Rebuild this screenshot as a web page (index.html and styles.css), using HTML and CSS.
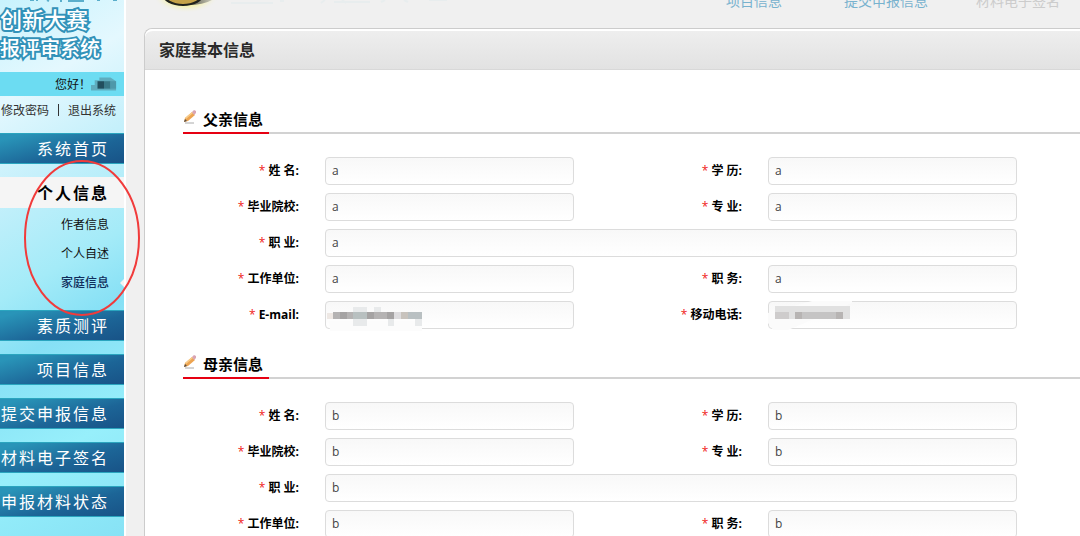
FILE: index.html
```html
<!DOCTYPE html>
<html lang="zh-CN">
<head>
<meta charset="utf-8">
<title>家庭基本信息</title>
<link rel="stylesheet" href="styles.css">
</head>
<body>
<div class="page">
  <aside class="sidebar">
    <div class="brand">
      <svg class="brand-edge" viewBox="0 0 124 4" aria-hidden="true"><path d="M30 0h4M37 0v1M47 0l2 1M61 0v2M68 1h16M97 0h3M113 0h4" stroke="#5aaecb" stroke-width="2"/></svg>
      <div class="brand-line">创新大赛</div>
      <div class="brand-line">报评审系统</div>
    </div>
    <div class="greeting"><span>您好！</span>
      <svg class="mask" viewBox="0 0 28 16" aria-hidden="true"><path d="M0 15V9h4V4h5V1h12l6 4v10z" fill="#5facbe"/><path d="M7 5h7v8H7z" fill="#224e5d"/><path d="M14 5h7v8h-7z" fill="#397988"/><path d="M21 5h6v8h-6z" fill="#4e98aa"/></svg>
    </div>
    <div class="account"><a href="#">修改密码</a><span class="bar"></span><a href="#">退出系统</a></div>
    <nav class="menu">
      <a class="item" href="#">系统首页</a>
      <div class="group">
        <a class="item current" href="#">个人信息</a>
        <div class="submenu">
          <a href="#">作者信息</a>
          <a href="#">个人自述</a>
          <a class="selected" href="#">家庭信息</a>
        </div>
        <svg class="marker" viewBox="0 0 118 156" aria-hidden="true"><ellipse cx="59" cy="78" rx="57" ry="77" fill="none" stroke="#f13b3b" stroke-width="2"/></svg>
      </div>
      <a class="item" href="#">素质测评</a>
      <a class="item" href="#">项目信息</a>
      <a class="item" href="#">提交申报信息</a>
      <a class="item" href="#">材料电子签名</a>
      <a class="item" href="#">申报材料状态</a>
    </nav>
  </aside>
  <div class="content">
    <header class="steps">
      <svg class="emblem" viewBox="0 0 320 14" aria-hidden="true">
        <defs><radialGradient id="glow"><stop offset="0.6" stop-color="#f5f2b0"/><stop offset="1" stop-color="#efefef" stop-opacity="0"/></radialGradient>
        <linearGradient id="shade"><stop offset="0" stop-color="#555544"/><stop offset="1" stop-color="#d8d8c8"/></linearGradient></defs>
        <ellipse cx="42" cy="-4" rx="33" ry="17" fill="url(#glow)"/>
        <path d="M44 5Q62 5 71-2H50z" fill="url(#shade)"/>
        <ellipse cx="39" cy="-6" rx="21" ry="12" fill="#20221d"/>
        <ellipse cx="39" cy="-6" rx="18" ry="10" fill="#c5a248"/>
        <path d="M87 3h42M136 1h4M181 0l-4 3M198 0l4 3M190 2h36M241 0l-4 2M260 0l4 2M285 0h18" stroke="#e8edee" stroke-width="2"/>
      </svg>
      <div class="step-links"><a href="#">项目信息</a><a href="#">提交申报信息</a><a class="off" href="#">材料电子签名</a></div>
    </header>
    <main class="panel">
      <h1 class="panel-title">家庭基本信息</h1>
      <form class="panel-body">
        <section class="section">
          <h2 class="section-title"><span class="tab"><svg class="pencil" viewBox="0 0 14 14" aria-hidden="true"><path d="M2 13h9" stroke="#aaa" stroke-width="1"/><path d="M1 12l1-4 7-6 3 3-7 6z" fill="#eda451"/><path d="M2 8l7-6 1 1-7 6z" fill="#f7cd8c"/><path d="M9 2l2-2 2 1v2l-2 2z" fill="#d9a5b4"/><path d="M1 12l1-3 2 2z" fill="#544b42"/></svg>父亲信息</span></h2>
          <div class="fields">
            <label for="f1">姓 名:</label><input id="f1" value="a">
            <label for="f2">学 历:</label><input id="f2" value="a">
            <label for="f3">毕业院校:</label><input id="f3" value="a">
            <label for="f4">专 业:</label><input id="f4" value="a">
            <label for="f5">职 业:</label><input class="wide" id="f5" value="a">
            <label for="f6">工作单位:</label><input id="f6" value="a">
            <label for="f7">职 务:</label><input id="f7" value="a">
            <label for="f8">E-mail:</label>
            <div class="masked"><input id="f8"><svg class="smudge" viewBox="0 0 100 30" aria-hidden="true"><path d="M4 20h93v10H5z" fill="#fcfcfc"/><path d="M28 6h14v19H28zM49 6h7v6h-7zM63 18h6v7h-6zM90 18h7v7h-7z" fill="#e8eaeb"/><path d="M2 12h6v6H2z" fill="#eee8e4"/><path d="M8 11h61v7H8z" fill="#b5b3b3"/><path d="M15 11h7v7h-7zM42 11h7v7h-7zM62 11h7v7h-7z" fill="#a5a3a3"/><path d="M28 11h14v7H28z" fill="#b8c0c0"/><path d="M69 11h7v7h-7z" fill="#dedddf"/><path d="M76 11h7v7h-7z" fill="#c8c3bd"/><path d="M83 11h14v7H83z" fill="#b9c0c2"/></svg></div>
            <label for="f9">移动电话:</label>
            <div class="masked"><input id="f9"><svg class="smudge" viewBox="0 0 100 30" aria-hidden="true"><path d="M0 12L44 0h40v2L20 29H5L0 22z" fill="#fbfbfb"/><path d="M7 5h75v13H7z" fill="#e1e1e1"/><path d="M7 11h7v7H7zM14 11h7v7h-7z" fill="#cecccc"/><path d="M27 11h48v7H27z" fill="#c5c4c4"/><path d="M27 11h7v7h-7zM68 11h7v7h-7z" fill="#b7b4b3"/></svg></div>
          </div>
        </section>
        <section class="section">
          <h2 class="section-title"><span class="tab"><svg class="pencil" viewBox="0 0 14 14" aria-hidden="true"><path d="M2 13h9" stroke="#aaa" stroke-width="1"/><path d="M1 12l1-4 7-6 3 3-7 6z" fill="#eda451"/><path d="M2 8l7-6 1 1-7 6z" fill="#f7cd8c"/><path d="M9 2l2-2 2 1v2l-2 2z" fill="#d9a5b4"/><path d="M1 12l1-3 2 2z" fill="#544b42"/></svg>母亲信息</span></h2>
          <div class="fields">
            <label for="m1">姓 名:</label><input id="m1" value="b">
            <label for="m2">学 历:</label><input id="m2" value="b">
            <label for="m3">毕业院校:</label><input id="m3" value="b">
            <label for="m4">专 业:</label><input id="m4" value="b">
            <label for="m5">职 业:</label><input class="wide" id="m5" value="b">
            <label for="m6">工作单位:</label><input id="m6" value="b">
            <label for="m7">职 务:</label><input id="m7" value="b">
          </div>
        </section>
      </form>
    </main>
  </div>
</div>
</body>
</html>
```
FILE: styles.css
```css
* { box-sizing: border-box; }
body {
  margin: 0;
  height: 100vh;
  overflow: hidden;
  background: #f0f0f0;
  color: #111;
  font-family: "Open Sans", "Noto Sans CJK SC", sans-serif;
  font-size: 12px;
}
a { color: inherit; text-decoration: none; }
.page { display: flex; min-height: 100vh; }

.sidebar {
  width: 126px;
  flex: none;
  border-right: 2px solid #fff;
  background: linear-gradient(150deg, #c9f3fd 0, #e4f8fe 90px, #c5f0fb 170px, #a4ebf8 260px, #86e0f5 320px, #97effb 420px, #84e0f4 100%);
}
.brand { height: 72px; overflow: hidden; }
.brand-edge { display: block; width: 100%; height: 4px; }
.brand-line {
  height: 30px;
  color: #fff;
  font-size: 22px;
  line-height: 30px;
  font-weight: 500;
  white-space: nowrap;
  -webkit-text-stroke: 4px #3292b9;
  paint-order: stroke fill;
}
.brand-line + .brand-line { font-size: 20px; }
.greeting {
  display: flex;
  align-items: center;
  justify-content: flex-end;
  height: 24px;
  padding-right: 7px;
  background: #6cdcf2;
}
.mask { width: 26px; height: 16px; }
.account {
  display: flex;
  align-items: center;
  justify-content: flex-end;
  height: 27px;
  padding-right: 8px;
  color: #333;
  white-space: nowrap;
}
.bar { width: 1px; height: 12px; margin: 0 9px; background: #333; }
.menu { display: flex; flex-direction: column; gap: 13px; padding-top: 10px; }
.item {
  display: flex;
  align-items: center;
  justify-content: flex-end;
  height: 31px;
  padding-right: 15px;
  border: 1px solid #2aa5bf;
  border-width: 1px 0;
  background: linear-gradient(165deg, #2994b8 10%, #1c6597 60%, #185387);
  color: #fff;
  font-size: 16px;
  letter-spacing: 2px;
  line-height: 26px;
  white-space: nowrap;
}
.current {
  border-color: #f5f5f5;
  background: #f5f5f5;
  color: #000;
  font-weight: 700;
}
.group { position: relative; }
.submenu { display: flex; flex-direction: column; padding: 2px 15px 0 0; text-align: right; }
.submenu a { height: 29px; line-height: 29px; }
.submenu .selected { color: #102e5c; font-weight: 500; }
.submenu .selected::after {
  content: "";
  position: absolute;
  right: 0;
  bottom: 10px;
  border: 4px solid transparent;
  border-right-color: #f4f4f4;
  border-left: 0;
}
.marker { position: absolute; z-index: 1; left: 23px; top: -17px; width: 118px; height: 156px; }

.content { flex: 1; min-width: 0; padding-left: 18px; }
.steps { display: flex; justify-content: space-between; height: 28px; overflow: hidden; }
.emblem { width: 320px; height: 14px; flex: none; }
.step-links {
  display: flex;
  align-items: flex-start;
  height: 20px;
  gap: 48px;
  margin-top: -9px;
  padding-right: 20px;
  color: #78b2ce;
  font-size: 14px;
  line-height: 20px;
  white-space: nowrap;
}
.step-links a:first-child { margin-right: 14px; }
.step-links .off { color: #ccc; }
.panel {
  min-height: calc(100vh - 28px);
  border: 1px solid #ccc;
  border-width: 1px 0 0 1px;
  border-radius: 8px 0 0 0;
  background: #fff;
}
.panel-title {
  margin: 0;
  padding: 0 14px;
  border-top: 2px solid #fff;
  border-bottom: 1px solid #d8d8d8;
  border-radius: 8px 0 0 0;
  background: linear-gradient(#eee, #e2e2e2);
  color: #2a2a2a;
  font-size: 16px;
  line-height: 38px;
}
.panel-body { padding: 34px 0 0 38px; }
.section { padding-bottom: 20px; }
.section-title { display: flex; margin: 0 0 23px; border-bottom: 2px solid #d2d2d2; font-size: 15px; line-height: 26px; color: #000; }
.tab { display: flex; gap: 6px; margin-bottom: -2px; padding: 2px 6px 0 0; border-bottom: 2px solid #e60012; }
.pencil { width: 14px; height: 14px; margin-top: 4px; }
.fields {
  display: grid;
  grid-template-columns: 116px 1fr 142px 1fr;
  gap: 8px 26px;
  padding-right: 63px;
}
label { color: #000; font-weight: 700; line-height: 28px; text-align: right; white-space: nowrap; }
label::before { content: "* "; color: #f02020; font-weight: 400; }
input {
  width: 100%;
  min-width: 0;
  height: 28px;
  padding: 0 6px 1px;
  border: 1px solid #dcdcdc;
  border-radius: 4px;
  background: linear-gradient(#f8f8f8, #fff);
  color: #444;
  font: inherit;
}
.wide { grid-column: 2 / -1; }
.masked { position: relative; }
.smudge { position: absolute; left: 0; top: 0; width: 100px; height: 30px; }
```
